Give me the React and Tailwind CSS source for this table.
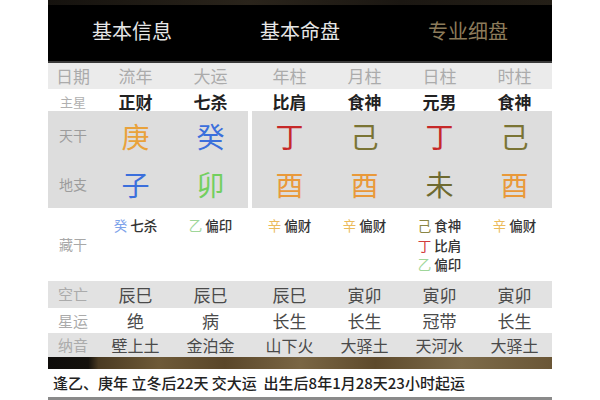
import React from "react";

const cols = ["流年", "大运", "年柱", "月柱", "日柱", "时柱"];
const zhuxing = ["正财", "七杀", "比肩", "食神", "元男", "食神"];
const tiangan = [
  ["庚", "#e9a23b"],
  ["癸", "#3b6fdc"],
  ["丁", "#c62828"],
  ["己", "#7a7434"],
  ["丁", "#c62828"],
  ["己", "#7a7434"],
];
const dizhi = [
  ["子", "#3b6fdc"],
  ["卯", "#72cf5e"],
  ["酉", "#e9993a"],
  ["酉", "#e9993a"],
  ["未", "#6e6a30"],
  ["酉", "#e9993a"],
];
const stemColor = {
  癸: "#7ea3ea",
  乙: "#9fd69a",
  辛: "#ebbb5c",
  己: "#8a8644",
  丁: "#d23c3c",
};
const canggan = [
  [["癸", "七杀"]],
  [["乙", "偏印"]],
  [["辛", "偏财"]],
  [["辛", "偏财"]],
  [["己", "食神"], ["丁", "比肩"], ["乙", "偏印"]],
  [["辛", "偏财"]],
];
const kongwang = ["辰巳", "辰巳", "辰巳", "寅卯", "寅卯", "寅卯"];
const xingyun = ["绝", "病", "长生", "长生", "冠带", "长生"];
const nayin = ["壁上土", "金泊金", "山下火", "大驿土", "天河水", "大驿土"];

const grid = "grid grid-cols-[50px_75px_75px_4px_75px_75px_75px_75px]";

// put an empty cell at the gap between 大运 and 年柱
const withGap = (cells) => [...cells.slice(0, 2), <div key="gap" />, ...cells.slice(2)];

const Row = ({ label, labelClass, className, children }) => (
  <div className={`${grid} items-center ${className}`}>
    <div className={`text-center ${labelClass}`}>{label}</div>
    {withGap(children)}
  </div>
);

export default function App() {
  return (
    <div
      className="w-[600px] h-[400px] bg-white overflow-hidden"
      style={{ fontFamily: '"Noto Sans CJK SC", "Noto Sans", sans-serif' }}
    >
      <div className="ml-[48px] w-[504px]">
        <div className="h-[5px] bg-[linear-gradient(90deg,#15120e,#2a241b_40%,#1b1712_70%,#241f17)]" />
        <div className="h-[56px] bg-black grid grid-cols-3 items-center text-[20px] leading-none">
          <div className="text-center text-[#e6e6e6] -mt-[4px]">基本信息</div>
          <div className="text-center text-[#e6e6e6] -mt-[4px]">基本命盘</div>
          <div className="text-center text-[#8c7b5a] -mt-[4px]">专业细盘</div>
        </div>
        <div className="h-[2px] bg-[#3a3a3a]" />

        <Row label="日期" labelClass="text-[17px] text-[#ababab]" className="h-[26px] bg-[#ebebeb]">
          {cols.map((c, i) => (
            <div key={i} className="text-center text-[17px] text-[#ababab]">{c}</div>
          ))}
        </Row>

        <Row label="主星" labelClass="text-[13px] text-[#b0b0b0]" className="h-[22px] bg-white">
          {zhuxing.map((c, i) => (
            <div key={i} className="text-center text-[17px] font-semibold text-[#222]">{c}</div>
          ))}
        </Row>

        <div className={`${grid} grid-rows-[49px_48px] bg-[#dddddd]`}>
          <div className="flex items-center justify-center text-[14px] text-[#9c9c9c]">天干</div>
          {tiangan.slice(0, 2).map(([c, col], i) => (
            <div key={i} className="flex items-center justify-center text-[28px] leading-none" style={{ color: col }}>{c}</div>
          ))}
          <div className="row-span-2 bg-white" />
          {tiangan.slice(2).map(([c, col], i) => (
            <div key={i} className="flex items-center justify-center text-[28px] leading-none" style={{ color: col }}>{c}</div>
          ))}
          <div className="flex items-center justify-center text-[14px] text-[#9c9c9c]">地支</div>
          {dizhi.map(([c, col], i) => (
            <div key={i} className="flex items-center justify-center text-[28px] leading-none" style={{ color: col }}>{c}</div>
          ))}
        </div>

        <div className={`${grid} h-[73px] bg-white`}>
          <div className="flex items-center justify-center text-[14px] text-[#a8a8a8]">藏干</div>
          {withGap(
            canggan.map((items, i) => (
              <div key={i} className="pt-[8px] flex justify-center">
                <div className="flex flex-col">
                  {items.map(([s, g], j) => (
                    <div key={j} className="text-[13.5px] leading-[19.5px] whitespace-pre">
                      <span style={{ color: stemColor[s] }}>{s}</span>
                      <span className="text-[#333] font-medium"> {g}</span>
                    </div>
                  ))}
                </div>
              </div>
            ))
          )}
        </div>

        <Row label="空亡" labelClass="text-[15px] text-[#ababab]" className="h-[27px] bg-[#e2e2e2]">
          {kongwang.map((c, i) => (
            <div key={i} className="text-center text-[17px] text-[#4a4a4a]">{c}</div>
          ))}
        </Row>
        <Row label="星运" labelClass="text-[15px] text-[#ababab]" className="h-[25px] bg-white">
          {xingyun.map((c, i) => (
            <div key={i} className="text-center text-[17px] text-[#4a4a4a]">{c}</div>
          ))}
        </Row>
        <Row label="纳音" labelClass="text-[15px] text-[#ababab]" className="h-[24px] bg-[#e2e2e2]">
          {nayin.map((c, i) => (
            <div key={i} className="text-center text-[16px] text-[#4a4a4a]">{c}</div>
          ))}
        </Row>

        <div className="h-[12px] bg-[linear-gradient(90deg,#0e0c0a_0%,#14110c_8%,#4a3a22_10%,#6e5a38_22%,#5a4629_35%,#7a6644_50%,#5e4a2c_65%,#7d6b4a_82%,#6a5636_100%)]" />

        <div className="h-[28px] flex items-center pl-[5px] text-[15px] font-medium text-[#222] whitespace-pre">
          逢乙、庚年 立冬后22天 交大运  出生后8年1月28天23小时起运
        </div>
        <div className="h-[4px] bg-[#8a8a8a]" />
      </div>
    </div>
  );
}
